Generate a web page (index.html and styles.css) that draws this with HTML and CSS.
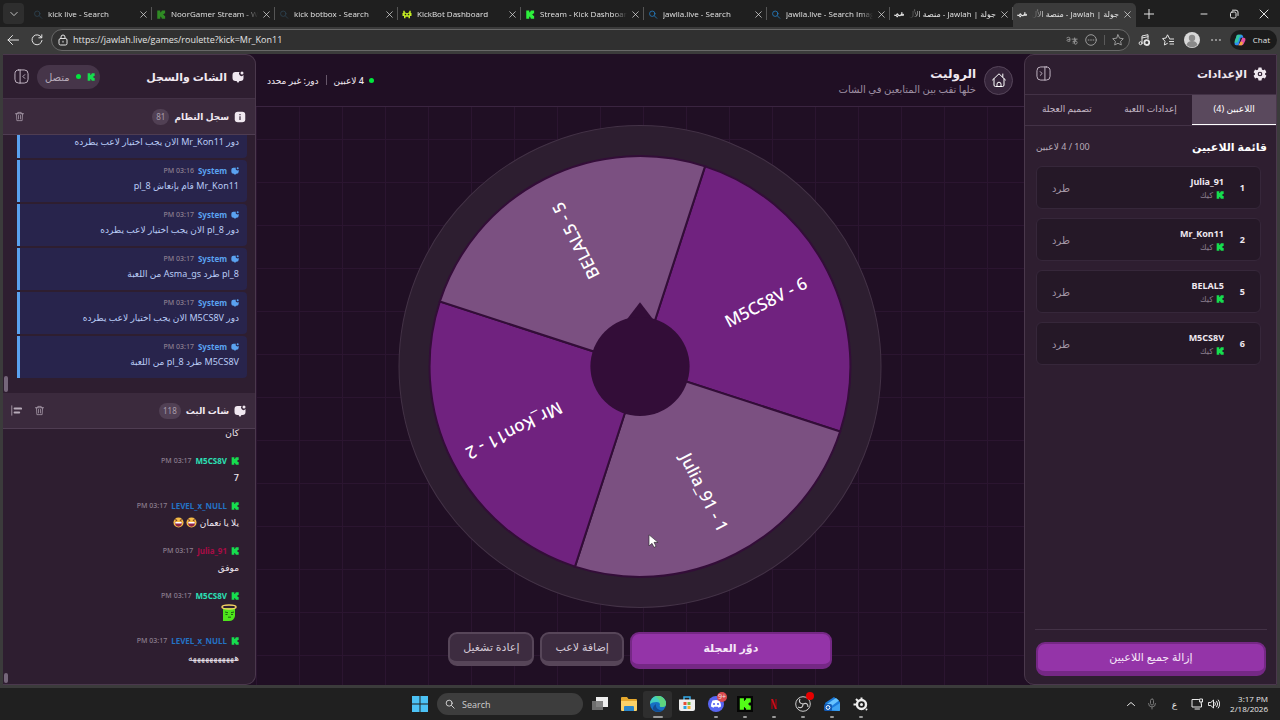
FILE: index.html
```
<!DOCTYPE html>
<html lang="ar">
<head>
    <meta charset="UTF-8">
    <meta name="viewport" content="width=device-width, initial-scale=1.0">
    <title>جولة | Jawlah - منصة الألعاب</title>
    <link rel="stylesheet" href="styles.css">
</head>
<body>
    <svg class="sprite" aria-hidden="true">
        <symbol id="kick" viewBox="0 0 24 24"><path fill="currentColor" d="M2 1h8v5h2V4h2V1h9v8h-3v2h-2v2h2v2h3v8h-9v-3h-2v-2h-2v5H2z"/></symbol>
        <symbol id="close" viewBox="0 0 10 10"><path d="M1 1l8 8M9 1L1 9"/></symbol>
        <symbol id="search" viewBox="0 0 12 12"><circle cx="5" cy="5" r="3.6"/><path d="M7.8 7.8L11 11"/></symbol>
        <symbol id="bubble" viewBox="0 0 24 24"><path fill="currentColor" d="M7 2h8a5 5 0 0 0 8 6v6a6 6 0 0 1-6 6h-2l-3 4-3-4H7a6 6 0 0 1-6-6V8a6 6 0 0 1 6-6z"/><circle cx="20" cy="4" r="3" fill="currentColor"/></symbol>
        <symbol id="trash" viewBox="0 0 16 16"><path d="M2 4h12M5.500 4V2h5v2M3.500 4l.7 10h7.600l.7-10M6.500 6.500v5M9.500 6.500v5"/></symbol>
        <symbol id="panel" viewBox="0 0 16 16"><rect x="1" y="1" width="14" height="14" rx="4"/><path d="M6.500 1v14M11.500 6l-2 2 2 2"/></symbol>
        <symbol id="jawlah" viewBox="0 0 14 8"><path d="M1 5q2 1 3-1t2 1q2 1 3 0t2 0V1.500M4 6.800h1M11 5h2V4" stroke-width="1.800"/></symbol>
    </svg>

    <!-- Browser tabs -->
    <div class="tabbar">
        <button class="tab-menu" aria-label="Tab actions"><svg class="line" viewBox="0 0 10 10"><path d="M1 3l4 4 4-4"/></svg></button>
        <div class="tab"><svg class="line fav dim"><use href="#search"/></svg><span>kick live - Search</span><button aria-label="Close"><svg class="line"><use href="#close"/></svg></button></div>
        <div class="tab"><svg class="fav kick-dark"><use href="#kick"/></svg><span>NoorGamer Stream - Watch</span><button aria-label="Close"><svg class="line"><use href="#close"/></svg></button></div>
        <div class="tab"><svg class="line fav dim"><use href="#search"/></svg><span>kick botbox - Search</span><button aria-label="Close"><svg class="line"><use href="#close"/></svg></button></div>
        <div class="tab"><svg class="fav bot" viewBox="0 0 12 12"><path fill="currentColor" d="M1 1h2v2h1v1h4V3h1V1h2v3h1v4h-2v3H8V9H4v2H2V8H0V4h1z"/><path fill="#1f1f1f" d="M3 5h2v2H3zM7 5h2v2H7z"/></svg><span>KickBot Dashboard</span><button aria-label="Close"><svg class="line"><use href="#close"/></svg></button></div>
        <div class="tab"><svg class="fav kick"><use href="#kick"/></svg><span>Stream - Kick Dashboard</span><button aria-label="Close"><svg class="line"><use href="#close"/></svg></button></div>
        <div class="tab"><svg class="line fav blue"><use href="#search"/></svg><span>jawlla.live - Search</span><button aria-label="Close"><svg class="line"><use href="#close"/></svg></button></div>
        <div class="tab"><svg class="line fav blue"><use href="#search"/></svg><span>jawlla.live - Search Imag</span><button aria-label="Close"><svg class="line"><use href="#close"/></svg></button></div>
        <div class="tab"><svg class="line fav"><use href="#jawlah"/></svg><span dir="rtl">جولة | Jawlah - منصة الأل</span><button aria-label="Close"><svg class="line"><use href="#close"/></svg></button></div>
        <div class="tab active"><svg class="line fav"><use href="#jawlah"/></svg><span dir="rtl">جولة | Jawlah - منصة الأل</span><button aria-label="Close"><svg class="line"><use href="#close"/></svg></button></div>
        <button class="new-tab" aria-label="New tab"><svg class="line" viewBox="0 0 10 10"><path d="M5 0v10M0 5h10"/></svg></button>
        <div class="window-buttons">
            <button aria-label="Minimize"><svg class="line" viewBox="0 0 10 10"><path d="M2 5h6"/></svg></button>
            <button aria-label="Restore"><svg class="line" viewBox="0 0 10 10"><rect x="1.500" y="3" width="5.500" height="6" rx="1.500"/><path d="M3.500 1.200H7Q9 1.200 9 3v3.500"/></svg></button>
            <button aria-label="Close window"><svg class="line"><use href="#close"/></svg></button>
        </div>
    </div>

    <!-- Address bar -->
    <div class="toolbar">
        <button aria-label="Back"><svg class="line" viewBox="0 0 12 12"><path d="M11.500 6H1M5.500 1.500L1 6l4.500 4.500"/></svg></button>
        <button aria-label="Reload"><svg class="line" viewBox="0 0 12 12"><path d="M10.500 3.500A5 5 0 1 0 11 6.500M10.800.8v3h-3"/></svg></button>
        <div class="address">
            <svg class="line" viewBox="0 0 12 12"><rect x="2" y="4.500" width="8" height="6.500" rx="1.500"/><path d="M4 4.500V3a2 2 0 0 1 4 0v1.500M6 7.200v1"/></svg>
            <input type="text" aria-label="Address" value="https://jawlah.live/games/roulette?kick=Mr_Kon11">
            <svg class="line faint" viewBox="0 0 14 12"><path d="M1 3.500q2-1.500 3.500 0v4Q1 8 1 6.300 1.500 5 4.500 5.300M7 5h6M10 3.500q-1 4 0 7M8.500 10q4-3 3-5M8 8q5-2 5 1 0 2-2 2"/></svg>
            <svg class="line faint" viewBox="0 0 12 12"><circle cx="6" cy="6" r="5.300"/><path d="M3.200 6h.8M5.600 6h.8M8 6h.8"/></svg>
            <i></i>
            <svg class="line faint" viewBox="0 0 12 12"><path d="M6 .8l1.600 3.400 3.700.5-2.700 2.600.7 3.700L6 9.200 2.700 11l.7-3.700L.7 4.700l3.700-.5z"/></svg>
        </div>
        <button aria-label="Media"><svg class="line" viewBox="0 0 12 12"><path d="M4 9V2l6-1.300v4M4 4l6-1.300"/><circle cx="2.600" cy="9.200" r="1.500"/><circle cx="8.800" cy="8.600" r="2.400" stroke-width="1.800"/></svg></button>
        <button aria-label="Favorites"><svg class="line" viewBox="0 0 12 12"><path d="M7.500 4.500L5.500.8 4 4l-3.500.6L3 7.200 2.400 11l3-1.600M8 5h4M7.500 7.500H12M8 10h4"/></svg></button>
        <button aria-label="Profile"><svg class="avatar" viewBox="0 0 16 16"><circle cx="8" cy="8" r="8" fill="#d8d8d8"/><circle cx="8" cy="6" r="3.200" fill="#8a8a8a"/><path d="M2.500 13q1-4 5.500-4t5.500 4q-5.500 4.500-11 0z" fill="#8a8a8a"/></svg></button>
        <button aria-label="More"><svg class="line" viewBox="0 0 12 12"><path d="M1.500 6h1.200M5.400 6h1.200M9.300 6h1.200"/></svg></button>
        <button class="copilot"><svg viewBox="0 0 16 16"><path d="M5 1h5q1.500 0 2 2l.5 2H9L6 15H3q-3 0-2-4l2-7q.5-3 2-3z" fill="#2f8cf0"/><path d="M5 1h5L7 5 5 11l-4 1q-.4-1 0-3l2-5q.5-3 2-3z" fill="#35c7a0"/><path d="M11 5h2q3 0 2 4l-2 4q-1 2-2.500 2H6l2-3z" fill="#e34fa0"/><path d="M6 15l3-5 3 1-1.500 4z" fill="#f5a640"/></svg>Chat</button>
    </div>

    <div class="page" dir="rtl">
        <!-- Settings -->
        <aside class="panel settings">
            <header class="settings-head">
                <svg class="gear" viewBox="0 0 24 24"><path fill="currentColor" fill-rule="evenodd" d="M9.500 1h5l.8 3.200 2 1.200 3.200-1 2.500 4.400-2.400 2.200v2l2.400 2.200-2.500 4.400-3.200-1-2 1.200-.8 3.200h-5l-.8-3.200-2-1.200-3.200 1L1 15.200 3.400 13v-2L1 8.800l2.500-4.400 3.200 1 2-1.200zM12 8a4 4 0 1 0 0 8 4 4 0 0 0 0-8z"/><circle cx="12" cy="12" r="2" fill="currentColor"/></svg>
                <h2>الإعدادات</h2>
                <button class="icon-btn" aria-label="طي الإعدادات"><svg class="line flip"><use href="#panel"/></svg></button>
            </header>
            <nav class="settings-tabs">
                <button class="selected">اللاعبين (4)</button>
                <button>إعدادات اللعبة</button>
                <button>تصميم العجلة</button>
            </nav>
            <div class="players">
                <div class="players-head"><h3>قائمة اللاعبين</h3><span>100 / 4 لاعبين</span></div>
                <div class="player"><b>1</b><div><strong>Julia_91</strong><small><svg><use href="#kick"/></svg>كيك</small></div><button>طرد</button></div>
                <div class="player"><b>2</b><div><strong>Mr_Kon11</strong><small><svg><use href="#kick"/></svg>كيك</small></div><button>طرد</button></div>
                <div class="player"><b>5</b><div><strong>BELAL5</strong><small><svg><use href="#kick"/></svg>كيك</small></div><button>طرد</button></div>
                <div class="player"><b>6</b><div><strong>M5CS8V</strong><small><svg><use href="#kick"/></svg>كيك</small></div><button>طرد</button></div>
            </div>
            <footer><button class="btn primary">إزالة جميع اللاعبين</button></footer>
        </aside>

        <!-- Wheel -->
        <main class="game">
            <header class="game-head">
                <a class="home" href="#" aria-label="الرئيسية"><svg class="line" viewBox="0 0 16 16"><path d="M1.500 8L8 1.800 14.500 8M3 6.800V13q0 1.500 1.500 1.500h7Q13 14.500 13 13V6.800M11.800 2v3M6 14.500v-2.300a2 2 0 0 1 4 0v2.300"/></svg></a>
                <div class="game-title"><h1>الروليت</h1><p>خلها تقب بين المتابعين في الشات</p></div>
                <div class="status"><span class="dot"></span><span>4 لاعبين</span><i></i><span>دور: غير محدد</span></div>
            </header>
            <div class="stage">
                <svg class="wheel" viewBox="-241 -241 482 482">
                    <circle r="240.500" fill="#2d1e30" stroke="#433246"/>
                    <g transform="rotate(18)" stroke="#330d38" stroke-width="2">
                        <path d="M0 0V-210A210 210 0 0 1 210 0z" fill="#70227f"/>
                        <path d="M0 0H210A210 210 0 0 1 0 210z" fill="#7b5081"/>
                        <path d="M0 0V210A210 210 0 0 1 -210 0z" fill="#70227f"/>
                        <path d="M0 0H-210A210 210 0 0 1 0 -210z" fill="#7b5081"/>
                    </g>
                    <g class="names">
                        <text transform="rotate(-27)" x="141" y="6">M5CS8V - 6</text>
                        <text transform="rotate(63)" x="141" y="6">Julia_91 - 1</text>
                        <text transform="rotate(153)" x="141" y="6">Mr_Kon11 - 2</text>
                        <text transform="rotate(243)" x="141" y="6">BELAL5 - 5</text>
                    </g>
                    <path d="M0-64L14-46H-14z" fill="#330d38"/>
                    <circle r="49.500" fill="#330d38"/>
                    <path d="M9 168v11l3-2.500 2 4 2-1-2-4h4z" fill="#fff" stroke="#222" stroke-width=".6"/>
                </svg>
            </div>
            <div class="actions">
                <button class="btn primary spin">دوّر العجلة</button>
                <button class="btn">إضافة لاعب</button>
                <button class="btn">إعادة تشغيل</button>
            </div>
        </main>

        <!-- Chat and log -->
        <aside class="panel chat">
            <header class="chat-head">
                <svg class="mark"><use href="#bubble"/></svg>
                <h2>الشات والسجل</h2>
                <span class="connected"><svg><use href="#kick"/></svg><span class="dot"></span>متصل</span>
                <button class="icon-btn" aria-label="طي الشات"><svg class="line"><use href="#panel"/></svg></button>
            </header>
            <div class="section-head">
                <svg class="mark" viewBox="0 0 16 16"><rect x="1" y="1" width="14" height="14" rx="4" fill="currentColor"/><path d="M8 4v1.600M8 7v5" stroke="#3a2a3d" stroke-width="1.600"/></svg>
                <h3>سجل النظام</h3><span class="count">81</span>
                <button aria-label="مسح السجل"><svg class="line"><use href="#trash"/></svg></button>
            </div>
            <div class="feed log">
                <article><p>دور Mr_Kon11 الان يجب اختيار لاعب يطرده</p></article>
                <article><header><svg><use href="#bubble"/></svg><b>System</b><time>03:16 PM</time></header><p>Mr_Kon11 قام بإنعاش pl_8</p></article>
                <article><header><svg><use href="#bubble"/></svg><b>System</b><time>03:17 PM</time></header><p>دور pl_8 الان يجب اختيار لاعب يطرده</p></article>
                <article><header><svg><use href="#bubble"/></svg><b>System</b><time>03:17 PM</time></header><p>pl_8 طرد Asma_gs من اللعبة</p></article>
                <article><header><svg><use href="#bubble"/></svg><b>System</b><time>03:17 PM</time></header><p>دور M5CS8V الان يجب اختيار لاعب يطرده</p></article>
                <article><header><svg><use href="#bubble"/></svg><b>System</b><time>03:17 PM</time></header><p>M5CS8V طرد pl_8 من اللعبة</p></article>
                <div class="thumb"></div>
            </div>
            <div class="section-head">
                <svg class="mark"><use href="#bubble"/></svg>
                <h3>شات البث</h3><span class="count">118</span>
                <button aria-label="مسح الشات"><svg class="line"><use href="#trash"/></svg></button>
                <button aria-label="محاذاة"><svg class="line" viewBox="0 0 14 14"><path d="M1 1v12"/><path d="M4.500 4.500H13M4.500 9.500h6" stroke-width="2.400"/></svg></button>
            </div>
            <div class="feed stream">
                <article><p>كان</p></article>
                <article><header><svg><use href="#kick"/></svg><b class="teal">M5CS8V</b><time>03:17 PM</time></header><p>7</p></article>
                <article><header><svg><use href="#kick"/></svg><b class="azure">LEVEL_x_NULL</b><time>03:17 PM</time></header><p>يلا يا نعمان <svg class="emoji" viewBox="0 0 12 12"><circle cx="6" cy="6" r="5.500" fill="#f7bd45"/><path d="M2 5.500h8q-.3 5-4 5t-4-5z" fill="#8b2348"/><path d="M2.500 5.500h7V7h-7z" fill="#fff"/><path d="M2.500 2.700l2 1-2 .8M9.500 2.700l-2 1 2 .8" stroke="#70352c" fill="none"/></svg> <svg class="emoji" viewBox="0 0 12 12"><circle cx="6" cy="6" r="5.500" fill="#f7bd45"/><path d="M2 5.500h8q-.3 5-4 5t-4-5z" fill="#8b2348"/><path d="M2.500 5.500h7V7h-7z" fill="#fff"/><path d="M2.500 2.700l2 1-2 .8M9.500 2.700l-2 1 2 .8" stroke="#70352c" fill="none"/></svg></p></article>
                <article><header><svg><use href="#kick"/></svg><b class="crimson">Julia_91</b><time>03:17 PM</time></header><p>موفق</p></article>
                <article><header><svg><use href="#kick"/></svg><b class="teal">M5CS8V</b><time>03:17 PM</time></header><p><svg class="emote" viewBox="0 0 18 18"><path d="M3 4h12v8q-1 5-6 5H3z" fill="#4ee61b"/><ellipse cx="9" cy="3" rx="7" ry="2" fill="none" stroke="#f2cf62" stroke-width="1.500"/><path d="M5 8l3 .7M11 8.700l3-.7M5.500 10.500h2M11 10.500h2M8 13.200h3" stroke="#1b6612"/></svg></p></article>
                <article><header><svg><use href="#kick"/></svg><b class="azure">LEVEL_x_NULL</b><time>03:17 PM</time></header><p>هههههههههههه</p></article>
                <div class="thumb"></div>
            </div>
        </aside>
    </div>

    <!-- Taskbar -->
    <footer class="taskbar">
        <nav class="apps">
            <button aria-label="Start"><svg viewBox="0 0 16 16"><path d="M0 0h7.500v7.500H0zM8.500 0H16v7.500H8.500zM0 8.500h7.500V16H0zM8.500 8.500H16V16H8.500z" fill="#4cc2f5"/></svg></button>
            <label class="search"><svg class="line"><use href="#search"/></svg><input type="text" placeholder="Search" aria-label="Search"></label>
            <button aria-label="Task view"><svg viewBox="0 0 16 16"><path d="M4 1h12v10H4z" fill="#eee"/><path d="M0 5h11v9H0z" fill="#777" fill-opacity=".9"/></svg></button>
            <button aria-label="Files"><svg viewBox="0 0 16 16"><path d="M0 2q0-1 1-1h5l1.500 2H15q1 0 1 1v10H0z" fill="#e5a82d"/><path d="M0 5h16v9q0 1-1 1H1q-1 0-1-1z" fill="#fbd267"/><path d="M3 15v-4q0-1 1-1h8q1 0 1 1v4z" fill="#2a86c9"/></svg></button>
            <button class="current" aria-label="Edge"><svg viewBox="0 0 16 16"><circle cx="8" cy="8" r="8" fill="#1670c4"/><path d="M0 8a8 8 0 0 1 16-.5q0 3.500-4 3.500-3 0-2-2 0-3-3.500-3Q2 6 0 8z" fill="#43cfc0"/><path d="M8 0a8 8 0 0 1 8 7.500q0 3.500-4 3.500-3 0-2-2Q11 4 5 .6z" fill="#5fd47e"/><path d="M6 8q-1 5 5 6.500 2 0 3-1-5 4-10 1-3-3 2-6.500z" fill="#124b94"/></svg></button>
            <button aria-label="Store"><svg viewBox="0 0 16 16"><path d="M5 4V1h6v3" fill="none" stroke="#33a9e8" stroke-width="1.500"/><path d="M0 3.500h16V13q0 2-2 2H2q-2 0-2-2z" fill="#eee"/><path d="M4.500 6h3v3h-3z" fill="#e74e35"/><path d="M8.500 6h3v3h-3z" fill="#75b943"/><path d="M4.500 10h3v3h-3z" fill="#27a3df"/><path d="M8.500 10h3v3h-3z" fill="#f2ae2e"/></svg></button>
            <button class="running" aria-label="Discord"><svg viewBox="0 0 16 16"><circle cx="8" cy="8" r="8" fill="#5865f2"/><path d="M4.500 4.500q3.500-1 7 0 1.500 3 1.500 6l-2.500 1.300-.8-1.100H6.300l-.8 1.100L3 10.500q0-3 1.500-6z" fill="#fff"/><circle cx="6" cy="8" r="1.100" fill="#5865f2"/><circle cx="10" cy="8" r="1.100" fill="#5865f2"/></svg><span class="badge">9+</span></button>
            <button class="running" aria-label="Kick"><svg viewBox="0 0 28 28"><path d="M0 0h28v28H0z" fill="#050505"/><svg x="3" y="3" width="22" height="22" color="#53fc18"><use href="#kick"/></svg></svg></button>
            <button class="running" aria-label="Netflix"><svg viewBox="0 0 16 16"><path d="M6 3v10M10 3v10" stroke="#8b0711" stroke-width="1.600"/><path d="M5.200 3h1.800l3.800 10H9z" fill="#c9111c"/></svg></button>
            <button class="running" aria-label="OBS"><svg viewBox="0 0 16 16"><circle cx="8" cy="8" r="7.300" fill="#222" stroke="#ccc"/><path d="M8 8Q3 7 5 3M8 8q5-2 5 3M8 8q0 5-5 3" fill="none" stroke="#ccc" stroke-width="1.200"/></svg><span class="badge rec"></span></button>
            <button class="running" aria-label="Outlook"><svg viewBox="0 0 16 16"><path d="M1 7l9-6 6 5v8q0 1-1 1H4z" fill="#1b7bdc"/><path d="M3 8l9-6 3 2.500L5 12z" fill="#67c3ff"/><path d="M5 14L16 7v7q0 1-1 1z" fill="#3fa4f3"/><rect y="8" width="8" height="7" rx="1.500" fill="#135bb5"/><circle cx="4" cy="11.500" r="1.900" fill="none" stroke="#fff"/></svg></button>
            <button class="running" aria-label="SteelSeries"><svg viewBox="0 0 16 16"><circle cx="8.500" cy="8.500" r="4.500" fill="none" stroke="#eee" stroke-width="2.400"/><circle cx="8.500" cy="8.500" r="1.500" fill="#eee"/><path d="M8.500 1.500v3M3 3l2 2M.5 8.500h3M13 13l1 1" stroke="#eee" stroke-width="2"/></svg></button>
        </nav>
        <div class="tray">
            <svg class="line" viewBox="0 0 12 12"><path d="M2.500 7.500L6 4.500l3.500 3"/></svg>
            <svg class="line mute" viewBox="0 0 12 12"><rect x="4.500" y="1" width="3" height="6" rx="1.500"/><path d="M2.500 5.500q0 3.500 3.500 3.500t3.500-3.500M6 9v2"/></svg>
            <span class="lang">ع</span>
            <svg class="line" viewBox="0 0 12 12"><path d="M7.500 1.500H1v7.500h9.500V6M4 11h4.500M9 1h2.500v3H9zM10.200 4v2"/></svg>
            <svg class="line" viewBox="0 0 12 12"><path d="M.8 4.500h2L5.500 2v8L2.800 7.500h-2zM7 4.500q1.200 1.500 0 3M8.700 3.200q2.200 2.800 0 5.600M10.300 2q3 4 0 8"/></svg>
            <time>3:17 PM<br>2/18/2026</time>
        </div>
    </footer>
</body>
</html>
```
FILE: styles.css
```
* {
    box-sizing: border-box;
}

body {
    margin: 0;
    height: 100vh;
    display: flex;
    flex-direction: column;
    overflow: hidden;
    background: #3b3b3b;
    color: #f0e8f0;
    font-family: "Noto Sans", "DejaVu Sans", sans-serif;
    font-size: 9px;
}

h1, h2, h3, p {
    margin: 0;
}

button {
    font: inherit;
    color: inherit;
    background: none;
    border: none;
    padding: 0;
    cursor: pointer;
}

input {
    font: inherit;
    color: inherit;
    background: none;
    border: none;
    outline: none;
    padding: 0;
    min-width: 0;
}

svg {
    display: block;
    flex: none;
}

.line {
    fill: none;
    stroke: currentColor;
    stroke-linecap: round;
    stroke-linejoin: round;
}

.sprite {
    position: absolute;
    width: 0;
    height: 0;
}

/* Browser */
.tabbar, .toolbar {
    flex: none;
    display: flex;
    align-items: center;
    height: 27px;
    font-family: "Open Sans", "DejaVu Sans", sans-serif;
    font-size: 8px;
    font-weight: 500;
    color: #e4e4e4;
}

.tabbar {
    background: #1f1f1f;
}

.tab-menu {
    width: 21px;
    height: 21px;
    margin: 0 5px 0 3px;
    border-radius: 4px;
    background: #2e2e2e;
    display: grid;
    place-items: center;
}

.tab-menu svg {
    width: 8px;
    height: 8px;
}

.tab {
    flex: 0 1 123px;
    min-width: 0;
    height: 24px;
    margin-top: 3px;
    padding: 0 5px 2px 4px;
    display: flex;
    align-items: center;
    gap: 5px;
    position: relative;
}

.tab:not(.active)::after {
    content: "";
    position: absolute;
    right: 0;
    top: 4px;
    height: 13px;
    border-right: 1px solid #555;
}

.tab.active {
    background: #3b3b3b;
    border-radius: 5px 5px 0 0;
}

.tab span {
    flex: 1;
    overflow: hidden;
    white-space: nowrap;
    line-height: 16px;
    mask-image: linear-gradient(to right, #000 85%, transparent);
}

.tab span[dir="rtl"] {
    mask-image: linear-gradient(to left, #000 85%, transparent);
}

.tab button svg {
    width: 7px;
    height: 7px;
}

.fav {
    width: 10px;
    height: 9px;
}

.dim {
    color: #2f4556;
}

.blue {
    color: #2586d0;
}

.kick-dark {
    color: #2f8a24;
}

.bot {
    color: #c6ee22;
}

.kick {
    color: #2df03c;
}

.new-tab {
    padding: 0 8px;
}

.new-tab svg {
    width: 10px;
    height: 10px;
}

.window-buttons {
    margin-left: auto;
    padding-right: 11px;
    display: flex;
    gap: 20px;
}

.window-buttons svg {
    width: 10px;
    height: 10px;
}

.toolbar {
    padding: 0 3px 2px 7px;
    gap: 12px;
}

.toolbar svg {
    width: 12px;
    height: 12px;
}

.address {
    flex: 1;
    height: 22px;
    margin: 0 -4px;
    padding: 0 5px;
    display: flex;
    align-items: center;
    gap: 7px;
    border: 1px solid #686868;
    border-radius: 11px;
    background: #303030;
}

.address input {
    flex: 1;
    height: 18px;
    font-size: 9px;
    margin-left: -3px;
}

.address i {
    height: 10px;
    border-left: 1px solid #5a5a5a;
}

.faint {
    color: #999;
}

.toolbar .avatar {
    width: 16px;
    height: 16px;
    margin: 0 -2px;
}

.copilot {
    display: flex;
    align-items: center;
    gap: 7px;
    height: 20px;
    margin-left: -4px;
    padding: 0 7px 0 4px;
    border-radius: 10px;
    background: #1b1b1b;
}

/* Page frame */
.page {
    flex: 1;
    min-height: 0;
    display: grid;
    grid-template-columns: 253px 1fr 253px;
    margin: 0 3px 3px;
    background-color: #200f24;
    background-image:
        linear-gradient(to right, #2b1530 1px, transparent 1px),
        linear-gradient(to bottom, #2b1530 1px, transparent 1px);
    background-size: 43px 43px;
    background-position: 38px 42px;
}

.panel {
    min-height: 0;
    display: flex;
    flex-direction: column;
    background: #2e1e30;
    border: 1px solid #4a384c;
    overflow: hidden;
}

.settings {
    border-radius: 10px 0 0 10px;
}

.chat {
    border-radius: 0 10px 10px 0;
    border-left: none;
}

.dot {
    width: 5px;
    height: 5px;
    border-radius: 50%;
    background: #00e63d;
}

h2 {
    font-size: 11px;
    line-height: 20px;
}

.icon-btn {
    margin-right: auto;
    color: #c9bccb;
}

.icon-btn svg {
    width: 15px;
    height: 15px;
}

.flip {
    transform: scaleX(-1);
}

/* Settings */
.settings-head {
    flex: none;
    height: 40px;
    display: flex;
    align-items: center;
    gap: 6px;
    padding: 0 9px 2px 11px;
    border-bottom: 1px solid #433246;
}

.gear {
    width: 14px;
    height: 14px;
}

.settings-tabs {
    flex: none;
    display: grid;
    grid-template-columns: repeat(3, 1fr);
    height: 31px;
    border-bottom: 1px solid #433246;
    color: #c2b6c4;
}

.settings-tabs button {
    padding-bottom: 3px;
}

.settings-tabs .selected {
    color: #fff;
    background: #5a495d;
    border-bottom: 1px solid #fff;
}

.players {
    flex: 1;
    min-height: 0;
    padding: 10px 15px 0 11px;
    display: flex;
    flex-direction: column;
    gap: 9px;
}

.players-head {
    display: flex;
    justify-content: space-between;
    align-items: center;
    height: 21px;
    margin-right: -6px;
    color: #b7abb9;
    white-space: nowrap;
}

.players-head h3 {
    font-size: 11px;
    color: #fff;
}

.player {
    height: 43px;
    flex: none;
    display: flex;
    align-items: center;
    padding: 0 15px;
    border: 1px solid #36273a;
    border-radius: 6px;
    background: #251827;
}

.player b {
    width: 21px;
}

.player strong {
    display: block;
    font-size: 9px;
    line-height: 14px;
}

.player small {
    display: flex;
    align-items: center;
    gap: 3px;
    font-size: 8px;
    line-height: 12px;
    color: #8c7f8f;
}

.player small svg {
    width: 8px;
    height: 8px;
    color: #16dd4e;
}

.player button {
    margin-right: auto;
    font-size: 10px;
    color: #a396a6;
}

.settings footer {
    margin: 0 9px 0 10px;
    padding: 12px 1px 8px;
    border-top: 1px solid #433246;
}

.btn {
    height: 34px;
    padding: 0 13px 3px;
    border: 2px solid #574659;
    border-bottom-width: 5px;
    border-radius: 9px;
    background: #3d2c40;
    color: #d3c8d5;
    font-size: 11px;
    font-weight: 500;
}

.btn.primary {
    border-color: #752885;
    background: #9434a8;
    color: #f6e6f8;
}

.settings .btn {
    width: 100%;
}

/* Game */
.game {
    min-width: 0;
    min-height: 0;
    display: flex;
    flex-direction: column;
}

.game-head {
    flex: none;
    height: 53px;
    display: flex;
    align-items: center;
    padding: 0 11px;
    background: #200f24;
    border-bottom: 1px solid #3a2440;
}

.home {
    width: 29px;
    height: 29px;
    display: grid;
    place-items: center;
    border: 1px solid #56455a;
    border-radius: 50%;
    background: #35243a;
    color: #fff;
}

.home svg {
    width: 16px;
    height: 16px;
}

.game-title {
    margin-right: 8px;
}

.game-title h1 {
    font-size: 12px;
    line-height: 17px;
}

.game-title p {
    font-size: 10px;
    line-height: 14px;
    color: #9d8ea1;
}

.status {
    margin-right: auto;
    display: flex;
    align-items: center;
    gap: 5px;
    font-weight: 500;
}

.status i {
    height: 10px;
    margin: 0 2px;
    border-left: 1px solid #67576a;
}

.stage {
    flex: 1;
    min-height: 0;
    padding: 18px 0 24px;
    display: flex;
    justify-content: center;
}

.wheel {
    width: 100%;
    height: 100%;
}

.names {
    direction: ltr;
    fill: #fff;
    font-size: 17px;
    font-weight: 500;
    text-anchor: middle;
}

.actions {
    flex: none;
    display: flex;
    justify-content: center;
    align-items: flex-start;
    gap: 6px;
    padding-bottom: 16px;
}

.btn.spin {
    width: 202px;
    height: 37px;
    font-weight: bold;
}

/* Chat */
.chat-head {
    flex: none;
    height: 44px;
    display: flex;
    align-items: center;
    gap: 5px;
    padding: 0 11px;
    border-bottom: 1px solid #433246;
}

.mark {
    width: 12px;
    height: 12px;
}

.connected {
    display: flex;
    align-items: center;
    gap: 6px;
    height: 24px;
    margin-right: auto;
    padding: 0 5px 0 8px;
    border-radius: 12px;
    background: #463549;
    color: #b7abb9;
    font-size: 10px;
}

.connected svg {
    width: 8px;
    height: 8px;
    color: #16dd4e;
}

.chat-head .icon-btn {
    margin-right: 3px;
}

.section-head {
    flex: none;
    height: 36px;
    display: flex;
    align-items: center;
    gap: 5px;
    padding: 0 9px 0 8px;
    background: #3b2a3d;
    border-bottom: 1px solid #4f3d52;
}

.section-head h3 {
    font-size: 9px;
}

.count {
    height: 16px;
    padding: 0 4px;
    border-radius: 8px;
    background: #514054;
    color: #a99dac;
    font-size: 8px;
    line-height: 16px;
}

.section-head button {
    margin-right: auto;
    padding: 0 3px;
    color: #b7abb9;
}

.section-head button + button {
    margin-right: 4px;
    padding: 0;
}

.section-head button svg {
    width: 11px;
    height: 11px;
}

.feed {
    flex: 1 1 0;
    min-height: 0;
    display: flex;
    flex-direction: column;
    justify-content: flex-end;
    gap: 2px;
    position: relative;
    overflow: hidden;
    padding: 0 8px 15px 14px;
}

.feed article {
    flex: none;
    padding: 4px 8px 7px;
}

.feed header {
    display: flex;
    align-items: center;
    gap: 4px;
    height: 13px;
    font-size: 8px;
}

.feed header svg {
    width: 8px;
    height: 8px;
    color: #16dd4e;
}

.feed time {
    color: #8c7f8f;
    font-size: 7px;
    font-weight: 500;
}

.feed p {
    line-height: 18px;
    white-space: nowrap;
}

.log article {
    border-left: 3px solid #5aa2f0;
    border-radius: 0 4px 4px 0;
    background: #28244c;
}

.log b, .log header svg {
    color: #5aa2f0;
}

.log p {
    color: #b9cbf5;
}

.stream {
    gap: 3px;
    padding-bottom: 12px;
}

.stream article {
    padding-bottom: 5px;
}

.stream p {
    height: 20px;
    padding-top: 2px;
    font-weight: 500;
}

.teal {
    color: #2be0b5;
}

.azure {
    color: #2472c4;
}

.crimson {
    color: #a80c45;
}

.emoji {
    display: inline-block;
    width: 11px;
    height: 11px;
    vertical-align: -2px;
}

.emote {
    width: 18px;
    height: 18px;
    margin-right: 1px;
}

.thumb {
    position: absolute;
    left: 1px;
    bottom: 1px;
    width: 4px;
    height: 16px;
    border-radius: 2px;
    background: #75667a;
}

.stream .thumb {
    height: 10px;
}

/* Taskbar */
.taskbar {
    flex: none;
    height: 32px;
    display: grid;
    grid-template-columns: 1fr auto 1fr;
    align-items: center;
    background: #202020;
    font-family: "Open Sans", "DejaVu Sans", sans-serif;
    color: #e8e8e8;
}

.apps {
    grid-column: 2;
    display: flex;
    align-items: center;
}

.apps button {
    position: relative;
    width: 29px;
    height: 27px;
    display: grid;
    place-items: center;
}

.apps button > svg {
    width: 16px;
    height: 16px;
}

.apps .current {
    border-radius: 3px;
    background: #2e2e2e;
}

.apps .running::after, .apps .current::after {
    content: "";
    position: absolute;
    bottom: 0;
    left: 50%;
    width: 4px;
    height: 2px;
    margin-left: -2px;
    border-radius: 1px;
    background: #999;
}

.apps .current::after {
    width: 10px;
    margin-left: -5px;
}

.badge {
    position: absolute;
    top: 1px;
    right: 3px;
    width: 10px;
    height: 10px;
    border-radius: 50%;
    background: #d9484e;
    font-size: 7px;
    line-height: 10px;
    text-align: center;
}

.badge.rec {
    width: 8px;
    height: 8px;
    background: #e60000;
}

.search {
    width: 146px;
    height: 22px;
    margin: 0 2px 0 3px;
    padding: 0 8px;
    display: flex;
    align-items: center;
    gap: 7px;
    border-radius: 11px;
    background: #3d3d3d;
}

.search svg {
    width: 10px;
    height: 10px;
}

.search input {
    flex: 1;
}

.search input::placeholder {
    color: #cfcfcf;
}

.tray {
    justify-self: end;
    display: flex;
    align-items: center;
    gap: 5px;
    padding-right: 12px;
}

.tray svg {
    width: 12px;
    height: 12px;
}

.tray .mute {
    margin: 0 9px 0 4px;
    color: #777;
}

.lang {
    margin-right: 9px;
}

.tray time {
    margin-left: 5px;
    text-align: right;
    font-size: 8px;
    line-height: 10px;
}
```
